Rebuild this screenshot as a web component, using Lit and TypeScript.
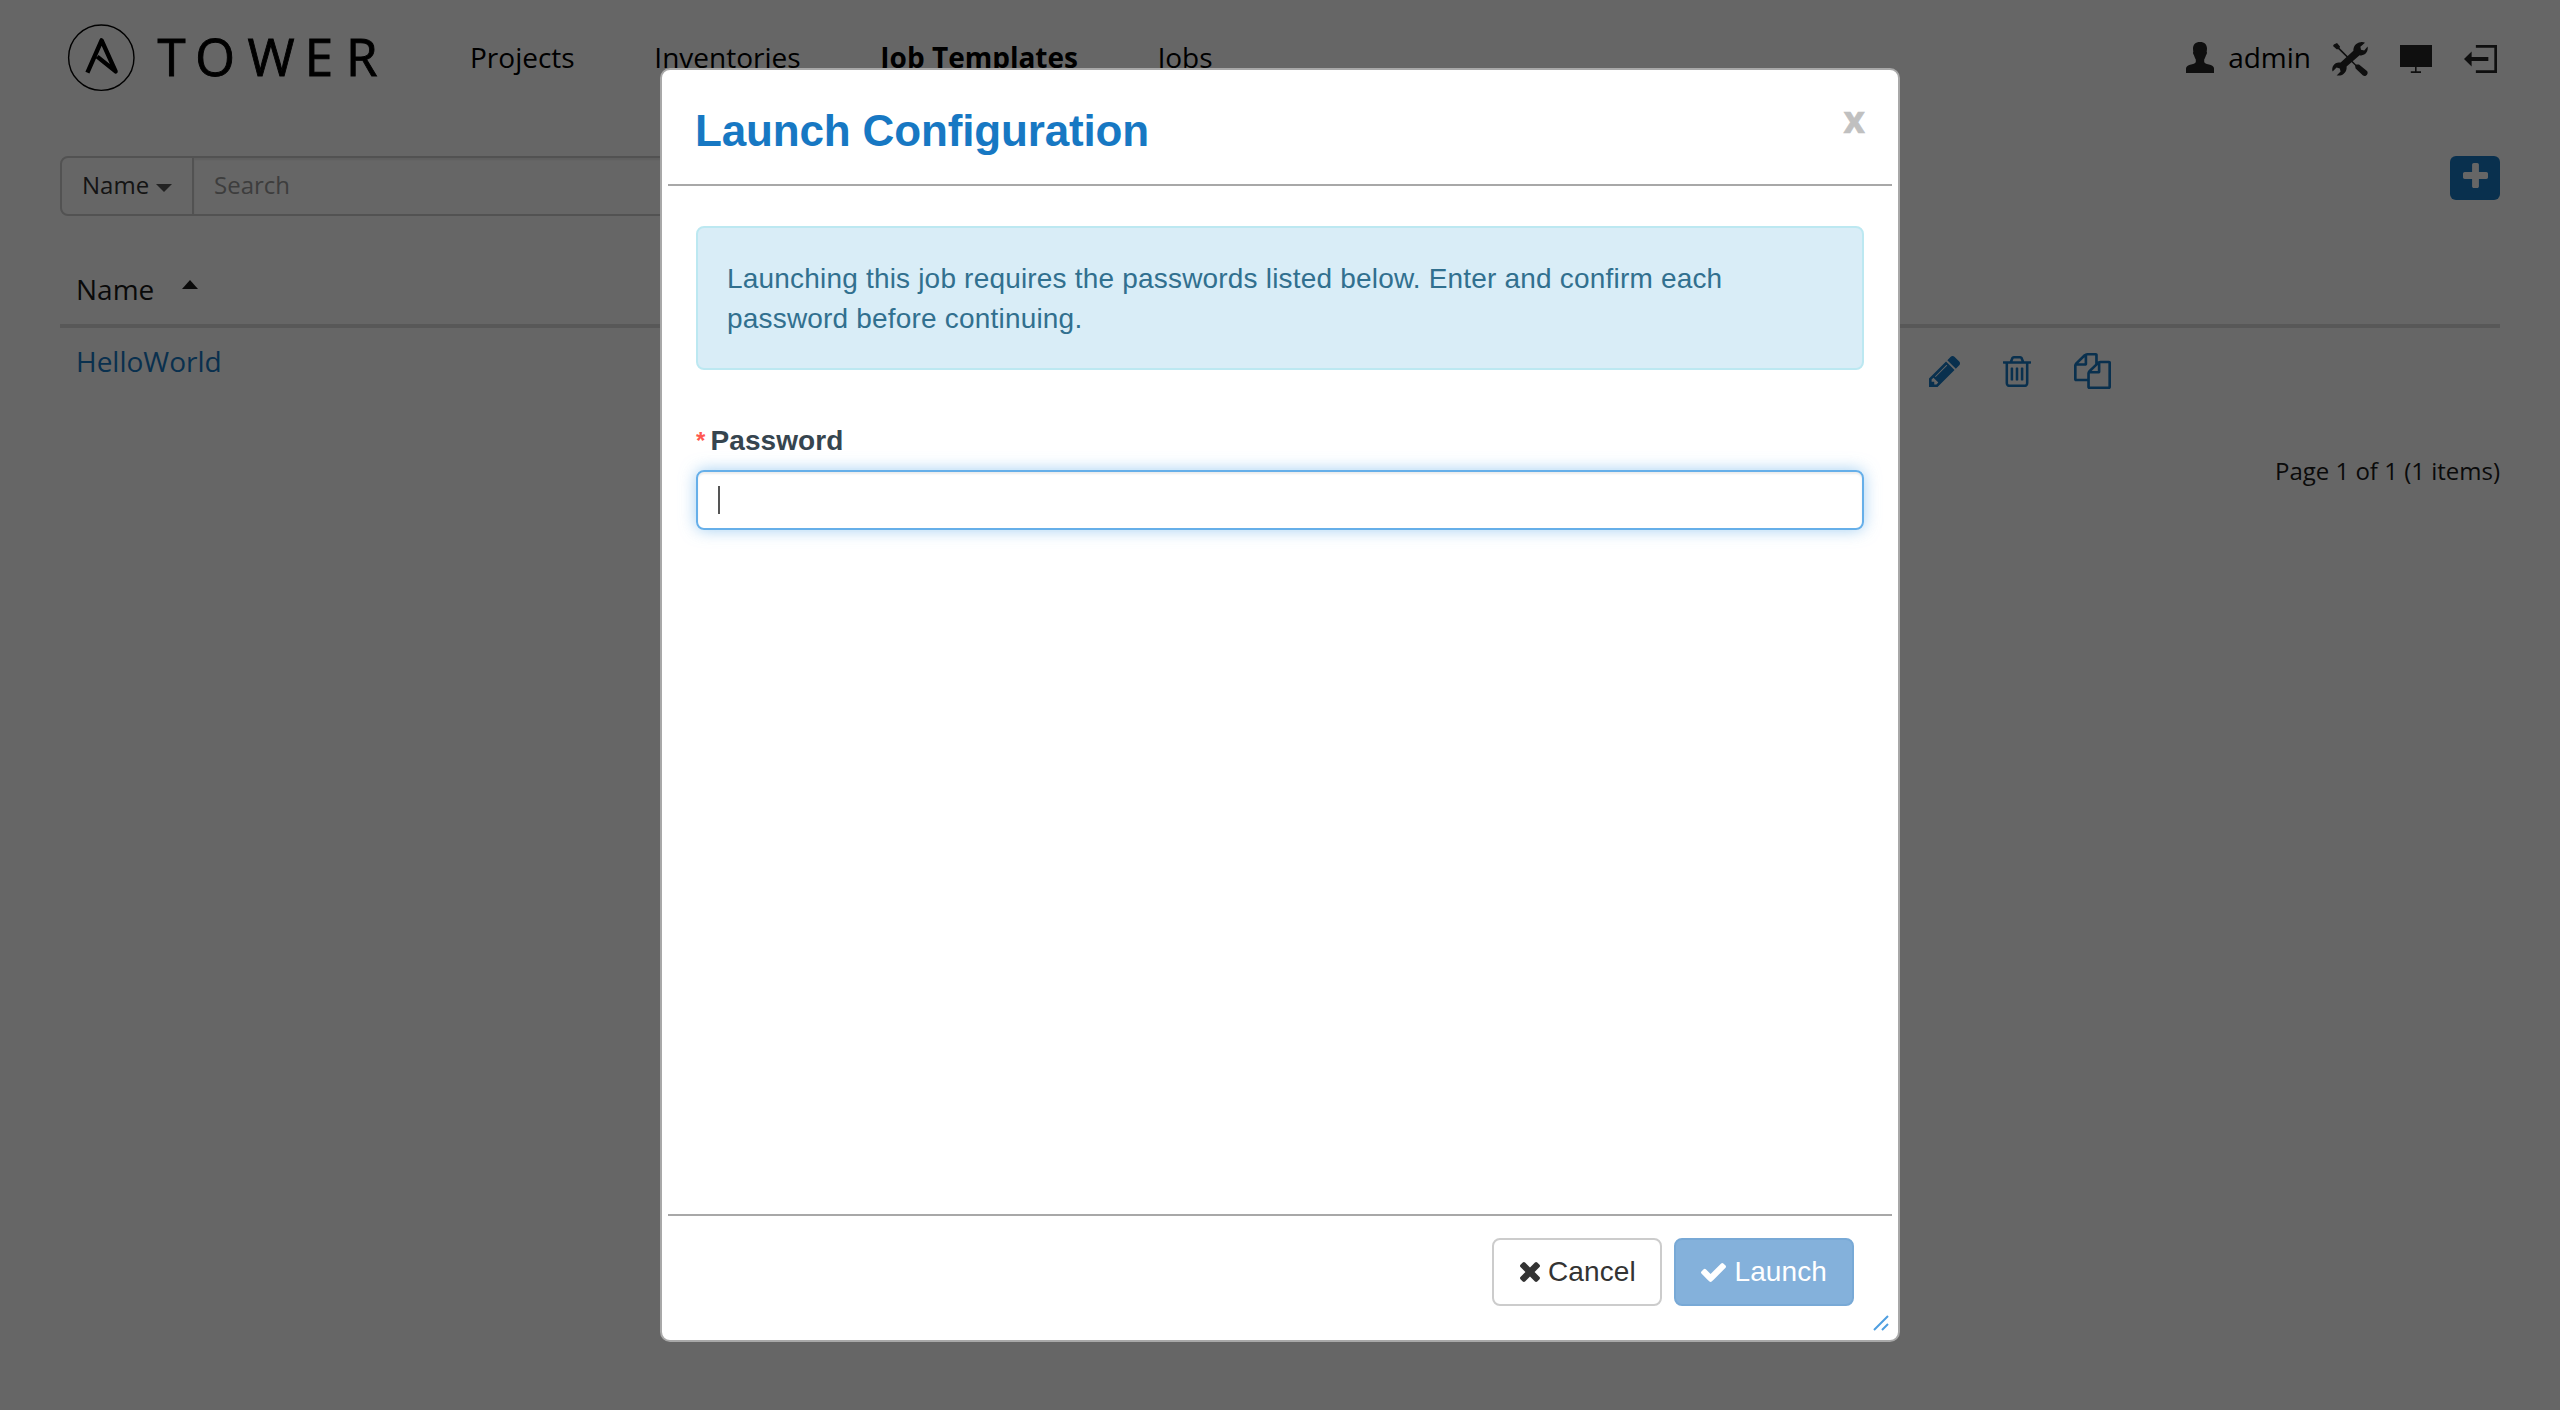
import { LitElement, html, css, svg, TemplateResult } from "lit";
import { customElement, property } from "lit/decorators.js";

interface Glyph {
  box: string;
  body: TemplateResult<2>;
}

const GLYPHS: Record<string, Glyph> = {
  pencil: {
    box: "128 149 1515 1515",
    body: svg`<path d="M491 1536l91-91-235-235-91 91v107h128v128h107zm523-928q0-22-22-22-10 0-17 7l-542 542q-7 7-7 17 0 22 22 22 10 0 17-7l542-542q7-7 7-17zm-54-192l416 416-832 832h-416v-416zm683 96q0 53-37 90l-166 166-416-416 166-165q36-38 90-38 53 0 91 38l235 234q37 39 37 91z"/>`,
  },
  trash: {
    box: "192 128 1408 1536",
    body: svg`<path d="M704 736v576q0 14-9 23t-23 9h-64q-14 0-23-9t-9-23v-576q0-14 9-23t23-9h64q14 0 23 9t9 23zm256 0v576q0 14-9 23t-23 9h-64q-14 0-23-9t-9-23v-576q0-14 9-23t23-9h64q14 0 23 9t9 23zm256 0v576q0 14-9 23t-23 9h-64q-14 0-23-9t-9-23v-576q0-14 9-23t23-9h64q14 0 23 9t9 23zm128 724v-948h-896v948q0 22 7 40.5t14.5 27 10.5 8.5h832q3 0 10.5-8.5t14.5-27 7-40.5zm-672-1076h448l-48-117q-7-9-17-11h-317q-10 2-17 11zm928 32v64q0 14-9 23t-23 9h-96v948q0 83-47 143.5t-113 60.5h-832q-66 0-113-58.5t-47-141.5v-952h-96q-14 0-23-9t-9-23v-64q0-14 9-23t23-9h309l70-167q15-37 54-63t79-26h320q40 0 79 26t54 63l70 167h309q14 0 23 9t9 23z"/>`,
  },
  copy: {
    box: "0 0 1792 1792",
    body: svg`<path d="M1696 384q40 0 68 28t28 68v1216q0 40-28 68t-68 28h-960q-40 0-68-28t-28-68v-288h-544q-40 0-68-28t-28-68v-672q0-40 20-88t48-76l408-408q28-28 76-48t88-20h416q40 0 68 28t28 68v328q68-40 128-40h416zm-544 213l-299 299h299v-299zm-640-384l-299 299h299v-299zm196 647l316-316v-416h-384v416q0 40-28 68t-68 28h-416v640h512v-256q0-40 20-88t48-76zm956 804v-1152h-384v416q0 40-28 68t-68 28h-416v640h896z"/>`,
  },
  plus: {
    box: "192 128 1408 1408",
    body: svg`<path d="M1600 736v192q0 40-28 68t-68 28h-416v416q0 40-28 68t-68 28h-192q-40 0-68-28t-28-68v-416h-416q-40 0-68-28t-28-68v-192q0-40 28-68t68-28h416v-416q0-40 28-68t68-28h192q40 0 68 28t28 68v416h416q40 0 68 28t28 68z"/>`,
  },
  times: {
    box: "302 366 1188 1188",
    body: svg`<path d="M1490 1322q0 40-28 68l-136 136q-28 28-68 28t-68-28l-294-294-294 294q-28 28-68 28t-68-28l-136-136q-28-28-28-68t28-68l294-294-294-294q-28-28-28-68t28-68l136-136q28-28 68-28t68 28l294 294 294-294q28-28 68-28t68 28l136 136q28 28 28 68t-28 68l-294 294 294 294q28 28 28 68z"/>`,
  },
  check: {
    box: "121 334 1550 1188",
    body: svg`<path d="M1671 566q0 40-28 68l-724 724-136 136q-28 28-68 28t-68-28l-136-136-362-362q-28-28-28-68t28-68l136-136q28-28 68-28t68 28l294 295 656-657q28-28 68-28t68 28l136 136q28 28 28 68z"/>`,
  },
  user: {
    box: "0 0 28 31",
    body: svg`<path d="M14 0C18.6 0 21 2.6 21 6.6C21 8 20.8 9 20.7 9.8C21.2 10.2 21 12.2 20.1 13C19.5 15.4 18.4 16.8 18.2 17.6V20C18.6 21.6 21 22 24 22.8C27 23.8 28 25 28 26.6V31H0V26.6C0 25 1 23.8 4 22.8C7 22 9.4 21.6 9.8 20V17.6C9.6 16.8 8.5 15.4 7.9 13C7 12.2 6.8 10.2 7.3 9.8C7.2 9 7 8 7 6.6C7 2.6 9.4 0 14 0Z"/>`,
  },
  tools: {
    box: "0 0 36 34",
    body: svg`
      <path d="M1.8 2.4L5 1L8 4.5L7.6 6L24 22.4L27 22.6L35 29C37 31.5 34 35.4 31 33.6L23.6 26.6L23 23.6L6.4 7.2L4.6 7.2L1 4Z"/>
      <path d="M28.6 .2C30.4 -.1 31.8 .2 33 .8L28.4 4.8L29 7.8L32.2 8.6L35.6 4.6C36.6 9.4 33 14.4 27.6 13.2L14.6 24.4C15.2 29.6 11 34.6 4.6 33.4L8.6 29.6L7.8 26.6L4.6 25.6L.6 29.6C-1 24.6 3 19.2 8.6 20.6L21.4 8.8C21.2 4.2 24 .8 28.6 .2Z"/>`,
  },
  monitor: {
    box: "0 0 32 28",
    body: svg`<path d="M0 0H32V22H16.6V26.2H21V28H10.8V26.2H15V22H0Z"/>`,
  },
  exit: {
    box: "0 0 32 28",
    body: svg`<path d="M11.5 0H32V28H11.5V25.2H29.4V2.8H11.5ZM0 14L7.4 6.6V12H23.6V16H7.4V21.6Z"/>`,
  },
  grip: {
    box: "0 0 16 16",
    body: svg`<path d="M1 15L15 1M9 15L15 9" fill="none" stroke="#4f9fe0" stroke-width="2"/>`,
  },
};

@customElement("tower-icon")
export class TowerIcon extends LitElement {
  @property() name = "plus";
  @property({ type: Number }) w = 24;
  @property({ type: Number }) h = 24;

  static styles = css`
    :host {
      display: block;
      flex: none;
    }
    .glyph {
      display: block;
      fill: currentColor;
      overflow: visible;
    }
  `;

  render() {
    const g = GLYPHS[this.name];
    return html`<svg class="glyph" width=${this.w} height=${this.h} viewBox=${g.box} preserveAspectRatio="none">${g.body}</svg>`;
  }
}

@customElement("tower-header")
export class TowerHeader extends LitElement {
  static styles = css`
    :host {
      display: flex;
      align-items: center;
      height: 114px;
      padding: 0 63px 0 64px;
      color: #000;
      font-size: 28px;
      line-height: 40px;
    }
    .logo {
      flex: none;
      margin-right: 86px;
    }
    .wordmark {
      font: 51px "Open Sans", "Noto Sans", sans-serif;
      stroke: #000;
      stroke-width: 0.9px;
    }
    .nav {
      display: flex;
      gap: 79.7px;
    }
    .active {
      font-weight: 700;
    }
    .tools {
      display: flex;
      align-items: center;
      margin-left: auto;
      color: #262626;
    }
    .user {
      display: flex;
      align-items: center;
      gap: 14.5px;
      margin-right: 21px;
    }
    .user-name {
      color: #000;
    }
    .links {
      display: flex;
      align-items: center;
      gap: 32px;
      padding-top: 4px;
    }
  `;

  render() {
    return html`
      <svg class="logo" width="320" height="80" viewBox="64 17 320 80">
        <circle cx="101.3" cy="57.7" r="32.7" fill="none" stroke="#000" stroke-width="1.4" />
        <path d="M87.4 72.6L101.6 40.4L115.6 71.4L97.2 56.6" fill="none" stroke="#000" stroke-width="4.4" stroke-linejoin="round" />
        <text class="wordmark" y="76" x="157.4 195.2 247.6 304.8 346">TOWER</text>
      </svg>
      <nav class="nav">
        <span>Projects</span>
        <span>Inventories</span>
        <span class="active">Job Templates</span>
        <span>Jobs</span>
      </nav>
      <div class="tools">
        <div class="user">
          <tower-icon name="user" w="28" h="31"></tower-icon>
          <span class="user-name">admin</span>
        </div>
        <div class="links">
          <tower-icon name="tools" w="36" h="34"></tower-icon>
          <tower-icon name="monitor" w="32" h="28"></tower-icon>
          <tower-icon name="exit" w="33" h="28"></tower-icon>
        </div>
      </div>
    `;
  }
}

@customElement("template-list")
export class TemplateList extends LitElement {
  static styles = css`
    :host {
      display: block;
      padding: 42px 60px 0;
      color: #1a1a1a;
      font-size: 28px;
      line-height: 40px;
    }
    .toolbar {
      display: flex;
      justify-content: space-between;
      align-items: flex-start;
    }
    .search {
      display: flex;
      width: 820px;
      height: 60px;
      box-sizing: border-box;
      border: 2px solid #ccc;
      border-radius: 8px;
      font-size: 24px;
    }
    .field {
      display: flex;
      align-items: center;
      gap: 7px;
      width: 132px;
      box-sizing: border-box;
      padding: 0 0 2px 20px;
      border-right: 2px solid #ccc;
      color: #333;
    }
    .down {
      margin-top: 6px;
      border: 8px solid transparent;
      border-top-color: #555;
      border-bottom: 0;
    }
    .query {
      flex: 1;
      display: flex;
      align-items: center;
      padding: 0 0 2px 20px;
      color: #999;
      box-shadow: inset 0 2px 2px rgba(0, 0, 0, 0.075);
    }
    .add {
      display: flex;
      justify-content: center;
      width: 50px;
      height: 44px;
      box-sizing: border-box;
      padding-top: 7px;
      border-radius: 6px;
      background: #1778c3;
      color: #fff;
    }
    .head {
      display: flex;
      align-items: center;
      gap: 28px;
      height: 72px;
      box-sizing: border-box;
      margin-top: 40px;
      padding: 0 16px 2px;
      border-bottom: 4px solid #ddd;
    }
    .up {
      margin-top: -10px;
      border: 8px solid transparent;
      border-bottom: 9px solid #1a1a1a;
      border-top: 0;
    }
    .row {
      display: grid;
      grid-template-columns: 1fr 571px;
      padding: 12px 0 0 16px;
      color: #1778c3;
    }
    .name {
      padding-top: 1px;
    }
    .actions {
      display: flex;
      align-items: center;
      gap: 43px;
      height: 62px;
    }
    .page {
      margin-top: 49px;
      text-align: right;
      font-size: 24px;
    }
  `;

  render() {
    return html`
      <div class="toolbar">
        <div class="search">
          <div class="field">Name<span class="down"></span></div>
          <div class="query">Search</div>
        </div>
        <div class="add"><tower-icon name="plus" w="25" h="25"></tower-icon></div>
      </div>
      <div class="head">Name<span class="up"></span></div>
      <div class="row">
        <span class="name">HelloWorld</span>
        <div class="actions">
          <tower-icon name="pencil" w="31" h="31"></tower-icon>
          <tower-icon name="trash" w="28" h="31"></tower-icon>
          <tower-icon name="copy" w="37" h="36"></tower-icon>
        </div>
      </div>
      <div class="page">Page 1 of 1 (1 items)</div>
    `;
  }
}

@customElement("launch-dialog")
export class LaunchDialog extends LitElement {
  static styles = css`
    :host {
      display: flex;
      flex-direction: column;
      width: 1240px;
      height: 1274px;
      box-sizing: border-box;
      padding: 0 6px;
      border: 2px solid #a8a8a8;
      border-radius: 10px;
      background: #fff;
      font-family: "Liberation Sans", Arial, sans-serif;
      font-size: 28px;
      line-height: 40px;
    }
    .title-bar {
      display: flex;
      justify-content: space-between;
      height: 116px;
      box-sizing: border-box;
      padding: 36px 27px 0 27px;
      border-bottom: 2px solid #a8a8a8;
    }
    .title {
      font-size: 44px;
      font-weight: 700;
      line-height: 50px;
      letter-spacing: -0.15px;
      color: #1778c3;
    }
    .close {
      font: 700 37px/50px "Open Sans", "Noto Sans", sans-serif;
      margin-top: -12px;
      color: #c0c0c0;
      -webkit-text-stroke: 0.6px #c0c0c0;
    }
    .body {
      flex: 1;
      padding: 40px 28px 0;
    }
    .notice {
      box-sizing: border-box;
      height: 144px;
      padding: 31px 29px 29px;
      border: 2px solid #bce8f1;
      border-radius: 8px;
      background: #d9edf7;
      color: #31708f;
      letter-spacing: 0.19px;
    }
    .label {
      display: flex;
      gap: 5px;
      margin: 51px 0 9px;
      font-weight: 700;
      color: #36454f;
      letter-spacing: 0.1px;
    }
    .star {
      font-size: 24px;
      line-height: 40px;
      font-weight: 700;
      color: #ff5850;
    }
    .input {
      display: flex;
      align-items: center;
      box-sizing: border-box;
      height: 60px;
      padding-left: 20px;
      border: 2px solid #66afe9;
      border-radius: 8px;
      box-shadow: inset 0 2px 2px rgba(0, 0, 0, 0.075), 0 0 16px rgba(102, 175, 233, 0.6);
    }
    .caret {
      width: 2px;
      height: 28px;
      background: #555;
    }
    .footer {
      display: flex;
      justify-content: flex-end;
      gap: 12px;
      height: 126px;
      box-sizing: border-box;
      padding: 22px 38px 0 0;
      border-top: 2px solid #a8a8a8;
    }
    .button {
      display: flex;
      align-items: center;
      box-sizing: border-box;
      height: 68px;
      padding-left: 26px;
      border: 2px solid #ccc;
      border-radius: 8px;
      color: #333;
      letter-spacing: 0.1px;
    }
    .cancel {
      width: 170px;
      gap: 8px;
    }
    .launch {
      width: 180px;
      padding-left: 25px;
      gap: 8.5px;
      border-color: #78a9d6;
      background: #84b1db;
      color: #fff;
    }
    .grip {
      position: absolute;
      right: 9px;
      bottom: 9px;
    }
  `;

  render() {
    return html`
      <div class="title-bar">
        <span class="title">Launch Configuration</span>
        <span class="close">x</span>
      </div>
      <div class="body">
        <div class="notice">
          Launching this job requires the passwords listed below. Enter and confirm each<br />password before continuing.
        </div>
        <div class="label"><span class="star">*</span><span>Password</span></div>
        <div class="input"><span class="caret"></span></div>
      </div>
      <div class="footer">
        <div class="button cancel"><tower-icon name="times" w="20" h="20"></tower-icon>Cancel</div>
        <div class="button launch"><tower-icon name="check" w="25" h="19"></tower-icon>Launch</div>
      </div>
      <tower-icon class="grip" name="grip" w="16" h="16"></tower-icon>
    `;
  }
}

@customElement("app-root")
export class AppRoot extends LitElement {
  static styles = css`
    :host {
      display: block;
      position: relative;
      height: 1410px;
      overflow: hidden;
      background: #fff;
      font-family: "Open Sans", "Noto Sans", sans-serif;
    }
    .backdrop {
      position: absolute;
      inset: 0;
      background: rgba(0, 0, 0, 0.6);
    }
    .dialog {
      position: absolute;
      left: 660px;
      top: 68px;
    }
  `;

  render() {
    return html`
      <tower-header></tower-header>
      <template-list></template-list>
      <div class="backdrop"></div>
      <launch-dialog class="dialog"></launch-dialog>
    `;
  }
}
